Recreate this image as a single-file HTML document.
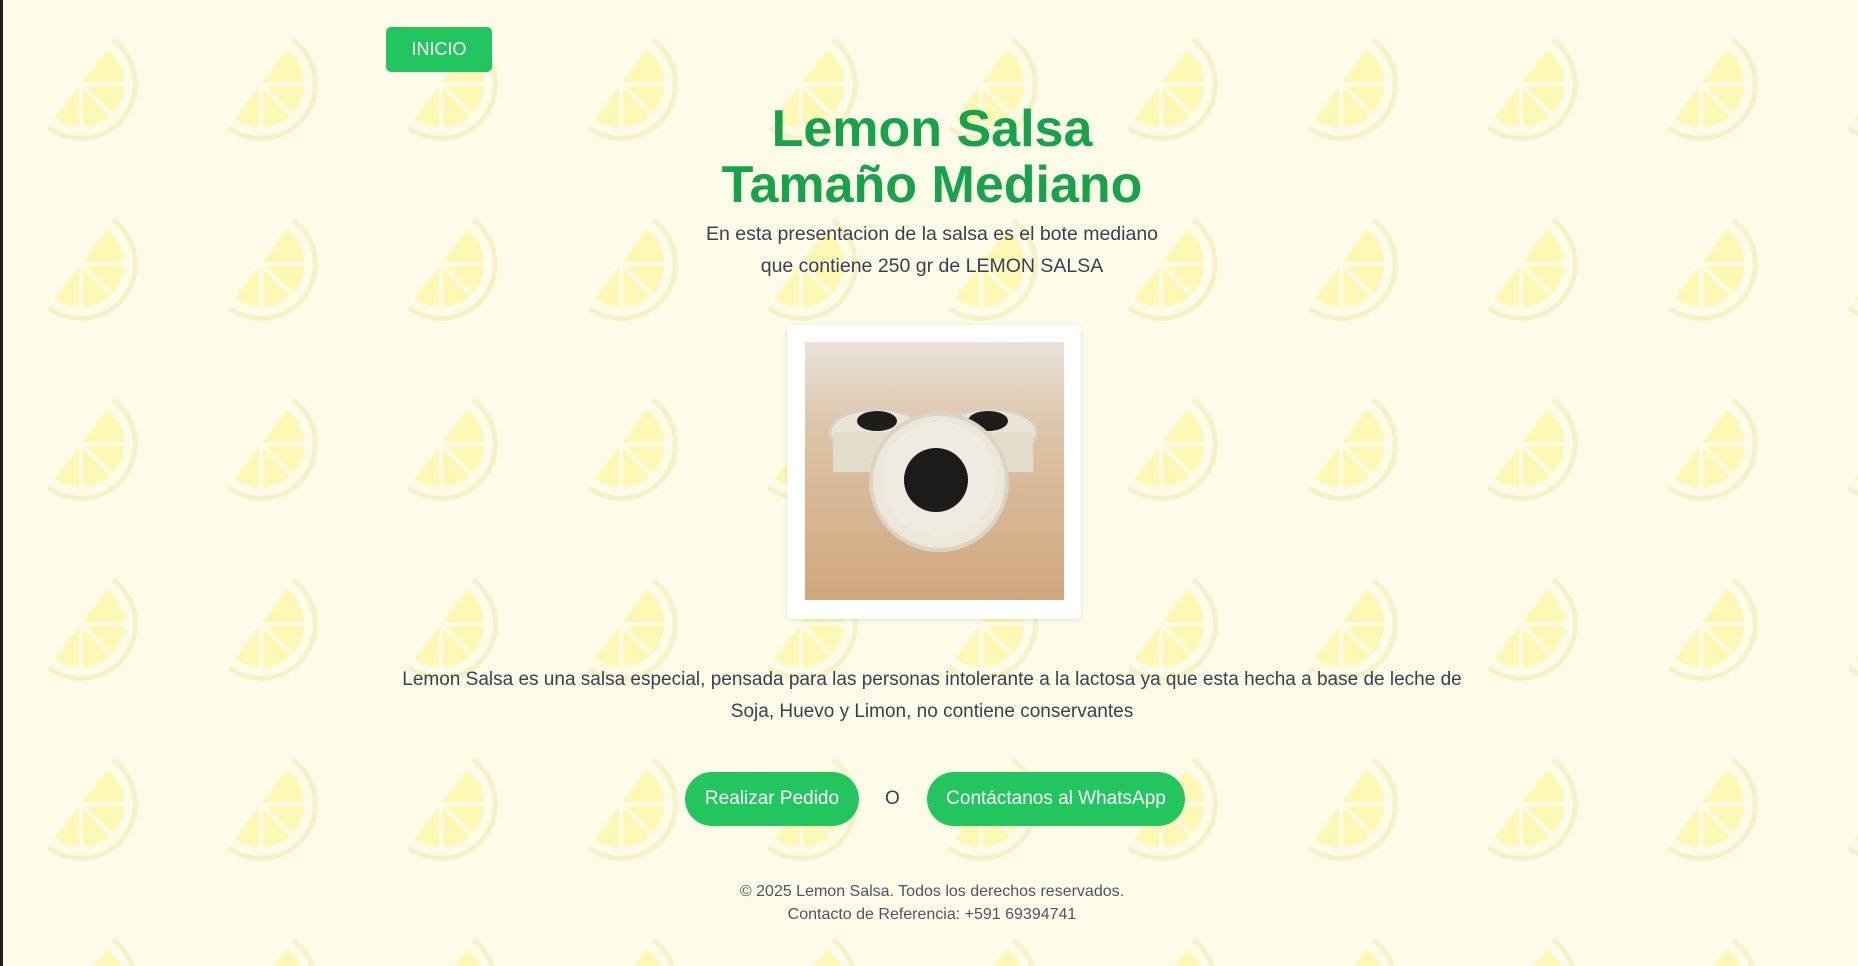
<!DOCTYPE html>
<html><head><meta charset="utf-8">
<style>
html,body{margin:0;padding:0}
body{width:1858px;height:966px;overflow:hidden;position:relative;font-family:"Liberation Sans",sans-serif;background-color:#fefce8;
background-image:url("data:image/svg+xml;utf8,<svg xmlns='http://www.w3.org/2000/svg' width='180' height='180'><g transform='translate(88,80)'><path d='M26 -34.5 A43 43 0 0 1 -26 34.5 Z' fill='%23fef8b4'/><g stroke='%23fefce8' stroke-width='4'><line x1='0' y1='0' x2='50' y2='0'/><line x1='0' y1='0' x2='36' y2='36'/><line x1='0' y1='0' x2='0' y2='50'/></g><path d='M32 -44 A54 54 0 0 1 -32 44' fill='none' stroke='%23f7f1c6' stroke-width='5'/></g></svg>");
background-position:-7px 4px;border-left:3px solid #222;box-sizing:border-box}
.inicio{position:absolute;left:383px;top:27px;width:106px;height:45px;background:#22c55e;color:#fff;border-radius:5px;font-size:18px;display:flex;align-items:center;justify-content:center}
h1{position:absolute;left:0;width:1858px;top:101px;margin:0;text-align:center;color:#16a34a;font-weight:900;font-size:52px;line-height:56px;letter-spacing:0}
.sub{position:absolute;left:0;width:1858px;top:218px;text-align:center;color:#374151;font-size:19.5px;line-height:32px}
.card{position:absolute;left:784px;top:325px;width:294px;height:294px;background:#fff;border-radius:5px;box-shadow:0 1px 4px rgba(0,0,0,.12)}
.photo{position:absolute;left:18px;top:17px;width:259px;height:258px;overflow:hidden}
.desc{position:absolute;left:383px;width:1092px;top:664px;text-align:center;color:#374151;font-size:19px;line-height:32px}
.btn{position:absolute;top:772px;height:54px;border-radius:27px;background:#22c55e;color:#fff;font-size:19px;display:flex;align-items:center;justify-content:center}
.o{position:absolute;left:882px;top:788px;font-size:19px;color:#374151}
.foot{position:absolute;left:0;width:1858px;top:880px;text-align:center;color:#4b5563;font-size:16px;line-height:23px}
</style></head><body>
<div class="inicio">INICIO</div>
<h1>Lemon Salsa<br>Tamaño Mediano</h1>
<div class="sub">En esta presentacion de la salsa es el bote mediano<br>que contiene 250 gr de LEMON SALSA</div>
<div class="card"><div class="photo">
<svg width="259" height="258" viewBox="0 0 259 258">
<defs><linearGradient id="w" x1="0" y1="0" x2="0" y2="1"><stop offset="0" stop-color="#e9e2da"/><stop offset=".35" stop-color="#dcc3a6"/><stop offset="1" stop-color="#d0a77b"/></linearGradient></defs>
<rect width="259" height="258" fill="url(#w)"/>
<ellipse cx="72" cy="90" rx="47" ry="23" fill="#e9e4d6" stroke="#d5d0c2" stroke-width="3"/>
<rect x="28" y="90" width="88" height="40" fill="#e2dccb"/>
<ellipse cx="72" cy="79" rx="20" ry="10" fill="#1f1c1c"/>
<ellipse cx="185" cy="90" rx="47" ry="23" fill="#e9e4d6" stroke="#d5d0c2" stroke-width="3"/>
<rect x="140" y="90" width="88" height="40" fill="#e2dccb"/>
<ellipse cx="183" cy="79" rx="20" ry="10" fill="#1f1c1c"/>
<ellipse cx="134" cy="140" rx="68" ry="68" fill="#ece7d9" stroke="#d9d4c6" stroke-width="4"/>
<circle cx="134" cy="137" r="57" fill="#efebe0"/>
<circle cx="131" cy="138" r="32" fill="#1d1a1a"/>
</svg></div></div>
<div class="desc">Lemon Salsa es una salsa especial, pensada para las personas intolerante a la lactosa ya que esta hecha a base de leche de<br>Soja, Huevo y Limon, no contiene conservantes</div>
<div class="btn" style="left:682px;width:174px">Realizar Pedido</div>
<div class="o">O</div>
<div class="btn" style="left:924px;width:258px">Contáctanos al WhatsApp</div>
<div class="foot">© 2025 Lemon Salsa. Todos los derechos reservados.<br>Contacto de Referencia: +591 69394741</div>
</body></html>
